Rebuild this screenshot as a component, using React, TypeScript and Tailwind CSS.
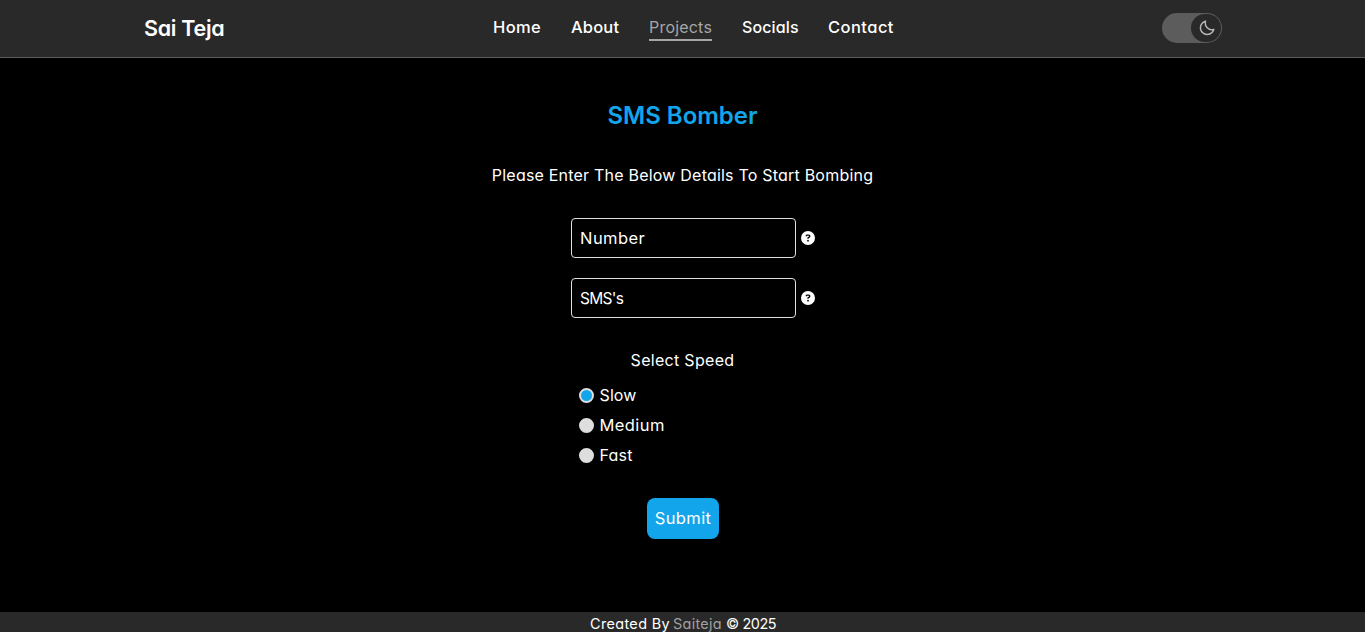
import { BiMoon } from "react-icons/bi";
import { FaCircleQuestion } from "react-icons/fa6";

const navItems = [
  { label: "Home", box: "w-[48px] text-[16.5px] tracking-[0.35px]", active: false },
  { label: "About", box: "w-[48px] text-[16.5px] tracking-[0.15px]", active: false },
  { label: "Projects", box: "w-[63px] tracking-[0.2px]", active: true },
  { label: "Socials", box: "w-[56px] tracking-[0.12px]", active: false },
  { label: "Contact", box: "w-[66px] text-[16.5px] tracking-[0.45px]", active: false },
];

const fields = [
  { label: "Number", spacing: "text-[16.5px] tracking-[0.45px]" },
  { label: "SMS's", spacing: "pt-px text-[15.5px] tracking-[-0.7px]" },
];

const speeds = [
  { label: "Slow", spacing: "tracking-[0.11px]", selected: true },
  { label: "Medium", spacing: "text-[16.5px] tracking-[0.4px]", selected: false },
  { label: "Fast", spacing: "tracking-[0.25px]", selected: false },
];

function Header() {
  return (
    <header className="flex h-[58px] shrink-0 items-center border-b border-[#5c5c5c] bg-[#292929] pr-[143px] pl-[144px]">
      <div className="w-[349px] pb-px text-[21.5px] leading-[30px] font-semibold tracking-[-0.28px]">Sai Teja</div>
      <nav className="flex gap-[30px] pb-1">
        {navItems.map((item) => (
          <a
            key={item.label}
            className={`${item.box} h-[28px] border-b-2 leading-[28px] whitespace-nowrap ${
              item.active ? "border-[#a6a6a6] text-[#a6a6a6]" : "border-transparent font-[460]"
            }`}
          >
            {item.label}
          </a>
        ))}
      </nav>
      <button className="mb-0.5 ml-auto flex h-[30px] w-[60px] items-center justify-end rounded-full bg-[#5c5c5c] p-px">
        <span className="flex h-7 w-[30px] items-center justify-center rounded-full bg-[#292929] pl-0.5">
          <BiMoon className="size-[18px] text-[#b8b8b8]" />
        </span>
      </button>
    </header>
  );
}

export default function App() {
  return (
    <div className="flex h-[632px] flex-col bg-black font-['Inter',sans-serif] text-base font-[440] text-white [font-feature-settings:'cv11']">
      <Header />
      <main className="flex grow flex-col items-center">
        <h1 className="mt-10 text-[24px] leading-9 font-semibold text-[#12a5ec]">SMS Bomber</h1>
        <p className="mt-[29px] leading-6 tracking-[0.21px]">Please Enter The Below Details To Start Bombing</p>
        <div className="mt-[31px] ml-[21px] flex flex-col gap-5">
          {fields.map((field) => (
            <div key={field.label} className="flex items-center gap-[5px]">
              <div
                className={`${field.spacing} flex h-10 w-[225px] items-center rounded-[4px] border border-[#e0e0e0] px-2`}
              >
                {field.label}
              </div>
              <FaCircleQuestion className="size-[14px]" />
            </div>
          ))}
        </div>
        <p className="mt-[30px] leading-6 tracking-[0.3px]">Select Speed</p>
        <div className="mt-[11px] flex w-[207px] flex-col gap-1.5">
          {speeds.map((speed) => (
            <label key={speed.label} className={`${speed.spacing} flex items-center gap-[5.5px] leading-6`}>
              <span
                className={`size-[15px] rounded-full border-2 border-[#dedede] ${
                  speed.selected ? "bg-[#12a5ec]" : "bg-[#dedede]"
                }`}
              />
              {speed.label}
            </label>
          ))}
        </div>
        <button className="mt-[31px] h-[41px] w-[72px] rounded-lg bg-[#12a5ec] pb-px pl-px text-[16.5px] leading-6 tracking-[0.4px]">
          Submit
        </button>
      </main>
      <footer className="flex h-5 shrink-0 items-center justify-center bg-[#292929] pt-[3px] pl-[2px] text-[14.4px] leading-5 whitespace-pre">
        <span className="w-[83px] tracking-[0.38px]">Created By</span>
        <span className="w-[53px] tracking-[0.3px] text-[#a0a0a0]">Saiteja</span>
        <span className="w-[51px] tracking-[-0.4px]">© 2025</span>
      </footer>
    </div>
  );
}
